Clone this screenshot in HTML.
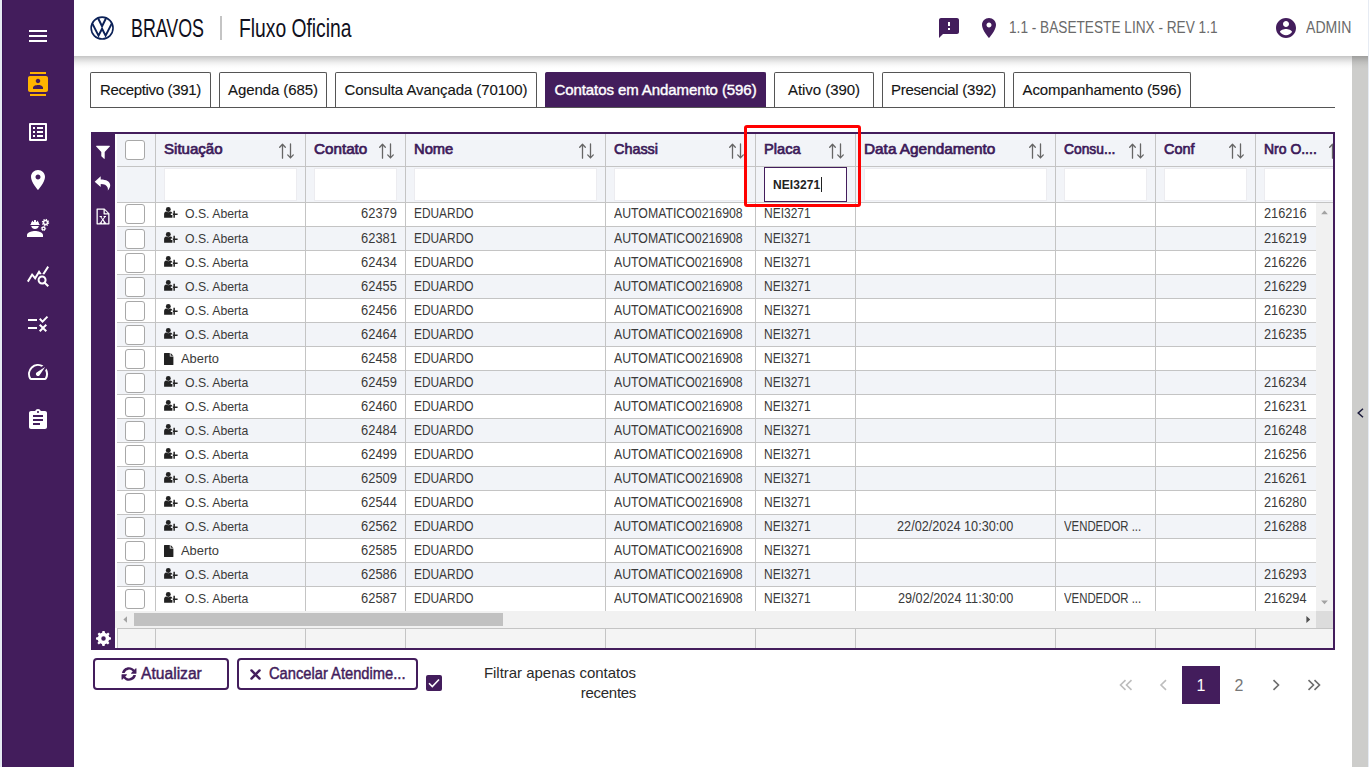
<!DOCTYPE html>
<html lang="pt-BR"><head><meta charset="utf-8"><title>BRAVOS | Fluxo Oficina</title>
<style>
*{box-sizing:border-box}
html,body{margin:0;padding:0}
body{width:1369px;height:767px;overflow:hidden;background:#fff;font-family:"Liberation Sans",sans-serif;color:#333;position:relative}
.abs{position:absolute}
.lstrip{position:absolute;left:0;top:0;width:2px;height:767px;background:#e6ebf3}
.side{position:absolute;left:2px;top:0;width:72px;height:767px;background:#431d5c;border-left:1px solid #3a1556}
.side svg{position:absolute;left:23px;width:24px;height:24px;fill:#fff}
.hdr{position:absolute;left:74px;top:0;width:1294px;height:56px;background:#fff;z-index:5}
.hsh{position:absolute;left:74px;top:56px;width:1294px;height:13px;z-index:5;background:linear-gradient(to bottom,rgba(0,0,0,.23) 0,rgba(0,0,0,.14) 25%,rgba(0,0,0,.065) 50%,rgba(0,0,0,.02) 75%,rgba(0,0,0,0) 100%)}
.rstrip{position:absolute;left:1352px;top:56px;width:16px;height:711px;background:#cdcdcb}
.redge{position:absolute;left:1368px;top:0;width:1px;height:767px;background:#e6ebf3;z-index:6}
.hdr svg{position:absolute}
.t1,.t2{position:absolute;top:13px;height:30px;line-height:30px;font-size:25px;color:#101020;white-space:nowrap;transform-origin:0 50%}
.hsep{position:absolute;left:146px;top:16px;width:2px;height:24px;background:#c4c4c4}
.htxt{position:absolute;top:18px;height:20px;line-height:20px;font-size:16px;color:#6a6a6a;white-space:nowrap;transform-origin:0 50%}
.tabs{position:absolute;left:90px;top:72px;width:1245px;height:36px;border-bottom:1px solid #555}
.tab{position:absolute;top:0;height:35px;border:1px solid #555;border-bottom:none;border-radius:2px 2px 0 0;background:#fff;font-size:15px;line-height:33px;text-align:center;color:#141414;-webkit-text-stroke:0.12px #141414;white-space:nowrap}
.tab.on{background:#431d5c;border-color:#431d5c;color:#fff;-webkit-text-stroke:0.4px #fff}
.grid{position:absolute;left:91px;top:132px;width:1244px;height:518px;border:2px solid #431d5c;border-left:none;background:#f2f4f8;overflow:hidden}
.tb{position:absolute;left:0;top:-2px;width:24px;height:518px;background:#431d5c}
.tb svg{position:absolute;fill:#fff}
.hrow{position:absolute;left:26px;top:0;height:33px;width:1300px;background:#f2f4f8;border-bottom:1px solid #c4c4c4}
.frow{position:absolute;left:26px;top:33px;height:36px;width:1300px;background:#f2f4f8;border-bottom:1px solid #c4c4c4}
.hc{position:absolute;top:0;height:100%;border-left:1px solid #c4c4c4;font-weight:700;font-size:15px;color:#3c1a59;line-height:30px;padding-left:8px;white-space:nowrap}
.hc svg{position:absolute;top:9px;width:16px;height:16px}
.fc{position:absolute;top:0;height:100%;border-left:1px solid #c4c4c4}
.fi{position:absolute;left:8px;top:1px;height:33px;background:#fff;border:1px solid #ececf0}
.rows{position:absolute;left:26px;top:69px;width:1199px;height:408px;overflow:hidden;background:#fff}
.r{position:relative;height:24px;width:1300px;border-bottom:1px solid #c4c4c4;background:#fff}
.r.odd{background:#f2f4f8}
.c{position:absolute;top:0;height:23px;line-height:23px;font-size:13px;border-left:1px solid #c4c4c4;padding-left:8px;white-space:nowrap;overflow:hidden;color:#3a3a3a}
.cb{position:absolute;left:8px;top:2px;width:20px;height:20px;border:1px solid #a8a8a8;border-radius:3px;background:#fff}
.c0{left:0;width:40px;border-left:none}
.c1{left:38px;width:150px}
.c2{left:188px;width:100px;text-align:right;padding-right:8px}
.c3{left:288px;width:200px}
.c4{left:488px;width:150px}
.c5{left:638px;width:100px}
.c6{left:738px;width:200px;text-align:center;padding-left:0}
.c7{left:938px;width:100px}
.c8{left:1038px;width:100px}
.c9{left:1138px;width:160px}
.ic-os{position:absolute;left:8px;top:5px;width:14px;height:11px;fill:#222}
.ic-ab{position:absolute;left:8px;top:6px;width:10px;height:12px;fill:#222}
.st{position:absolute;left:29px;font-size:13.5px;transform:scaleX(.907);transform-origin:0 50%}
.st2{position:absolute;left:25px;font-size:13.5px;transform:scaleX(.955);transform-origin:0 50%}
.btn{position:absolute;top:658px;height:32px;border:2px solid #431d5c;border-radius:4px;background:#fff;color:#431d5c;font-weight:400;font-size:16px;line-height:28px;white-space:nowrap;-webkit-text-stroke:0.45px #431d5c}
.btn svg{position:absolute;fill:#431d5c}
.btn span{position:absolute;top:0;transform-origin:0 50%}
.pg{position:absolute;top:666px;width:38px;height:38px;line-height:40px;text-align:center;font-size:16px;color:#777}
.chev{position:absolute}
.pg.on{background:#431d5c;color:#fff}
.vsb{position:absolute;left:1225px;top:69px;width:17px;height:408px;background:#f1f1f1}
.hsb{position:absolute;left:24px;top:477px;width:1218px;height:17px;background:#f1f1f1}
.thumb{position:absolute;left:19px;top:2px;width:369px;height:13px;background:#c1c1c1}
.corner{position:absolute;left:1201px;top:0;width:17px;height:17px;background:#dcdcdc}
.foot{position:absolute;left:26px;top:494px;width:1300px;height:20px;background:#f2f4f8;border-top:1px solid #c4c4c4}

.gap{position:absolute;left:24px;top:0;width:2px;height:514px;background:#fff}

.r:first-child .c{line-height:21px}
.r:first-child .cb{top:1px}
.r:first-child .ic-os{top:4px}

.r:last-child{border-bottom:none}
.foot{border-left:1px solid #c4c4c4;background:#f4f4f4}
.foot .fc{margin-left:-1px}
.foot .fc:first-child{margin-left:0}
.r:last-child .c{height:24px}

.c b{display:inline-block;font-weight:400;font-size:14px;transform-origin:0 50%}
.c2 b{transform:scaleX(.92);transform-origin:100% 50%}
.c3 b{transform:scaleX(.85)}
.c4 b{transform:scaleX(.878)}
.c5 b{transform:scaleX(.857)}
.c6 b{transform:scaleX(.906);transform-origin:50% 50%}
.c7 b{transform:scaleX(.813)}
.c9 b{transform:scaleX(.91)}
.hc b{display:inline-block;transform-origin:0 50%;font-weight:400;-webkit-text-stroke:0.7px #3c1a59}

</style></head>
<body>
<svg width="0" height="0" style="position:absolute">
<defs>
<g id="i-userplus"><circle cx="4.300" cy="2.500" r="2.450"/><path d="M0.100 10.700V7c0-1.500 1-2.400 2-2.500.6.500 1.400.8 2.200.8s1.600-.3 2.200-.8c1 .1 1.800.9 1.900 2.100H6.800v1.400h1.600v2.700z"/><path d="M9.400 3.700h1.500v2.900h2.700V8h-2.700v2.700H9.400V8H8.900V6.600h.5z"/></g>
<path id="i-file" d="M0.600 0h5.200v3.400h3.600V11.400a0.600 0.600 0 0 1-0.600 0.600H0.600A0.600 0.600 0 0 1 0 11.400V0.600A0.600 0.600 0 0 1 0.600 0zM6.600 0.100L9.300 2.700H6.600z"/>
<g id="i-sort" fill="none" stroke="#666" stroke-width="1.300" stroke-linecap="round" stroke-linejoin="round"><path d="M3.500 15.200V1.300M0.700 4.300l2.800-3 2.800 3"/><path d="M11.500 1v13.900M8.700 11.900l2.800 3 2.800-3"/></g>
</defs>
</svg>
<div class="lstrip"></div>
<div class="side">
<svg style="top:24px" viewBox="0 0 24 24"><path d="M3 18h18v-2H3v2zm0-5h18v-2H3v2zm0-7v2h18V6H3z"/></svg>
<svg style="top:72px;fill:#ffb300" viewBox="0 0 24 24"><path d="M20 0H4v2h16V0zM4 24h16v-2H4v2zM20 4H4c-1.100 0-2 .9-2 2v12c0 1.100.9 2 2 2h16c1.100 0 2-.9 2-2V6c0-1.100-.9-2-2-2zm-8 2.750c1.240 0 2.250 1.010 2.250 2.250s-1.010 2.250-2.250 2.250S9.750 10.240 9.750 9 10.760 6.750 12 6.750zM17 17H7v-1.500c0-1.670 3.330-2.500 5-2.500s5 .83 5 2.500V17z"/></svg>
<svg style="top:120px" viewBox="0 0 24 24"><path d="M19 5v14H5V5h14m1.100-2H3.900c-.5 0-.9.400-.9.900v16.200c0 .4.400.9.900.9h16.200c.4 0 .9-.5.900-.9V3.900c0-.5-.5-.9-.9-.9zM11 7h6v2h-6V7zm0 4h6v2h-6v-2zm0 4h6v2h-6zM7 7h2v2H7zm0 4h2v2H7zm0 4h2v2H7z"/></svg>
<svg style="top:168px" viewBox="0 0 24 24"><path d="M12 2C8.130 2 5 5.130 5 9c0 5.250 7 13 7 13s7-7.750 7-13c0-3.870-3.130-7-7-7zm0 9.500c-1.380 0-2.500-1.120-2.500-2.500s1.120-2.500 2.500-2.500 2.500 1.120 2.500 2.500-1.120 2.500-2.500 2.500z"/></svg>
<svg style="top:216px" viewBox="0 0 24 24"><path d="M9 15c-2.670 0-8 1.340-8 4v2h16v-2c0-2.660-5.330-4-8-4zM4.740 9h8.530c.27 0 .49-.22.490-.49v-.02a.49.490 0 0 0-.49-.49H13c0-1.480-.81-2.750-2-3.450v.95c0 .28-.22.500-.5.500s-.5-.22-.5-.5V4.140C9.680 4.060 9.350 4 9 4s-.68.060-1 .14V5.500c0 .28-.22.500-.5.500S7 5.780 7 5.500v-.95C5.810 5.250 5 6.520 5 8h-.26a.49.490 0 0 0-.49.490v.03c0 .26.220.48.490.48zM9 13c1.860 0 3.410-1.280 3.860-3H5.140c.45 1.720 2 3 3.860 3z"/><g fill="none" stroke="#fff"><circle cx="19.500" cy="6.500" r="2" stroke-width="1.500"/><circle cx="19.500" cy="6.500" r="3.100" stroke-width="1.200" stroke-dasharray="1.200 1.230"/><circle cx="17.500" cy="12.500" r="1.400" stroke-width="1.200"/><circle cx="17.500" cy="12.500" r="2.200" stroke-width="1" stroke-dasharray="0.900 0.830"/></g></svg>
<svg style="top:264px" viewBox="0 0 24 24"><path d="M19.880 18.470c.44-.7.700-1.510.7-2.390 0-2.490-2.010-4.500-4.500-4.500s-4.500 2.010-4.500 4.500 2.010 4.500 4.490 4.500c.88 0 1.700-.26 2.390-.7L21.580 23 23 21.580l-3.120-3.110zm-3.800.11c-1.380 0-2.500-1.120-2.500-2.500s1.120-2.500 2.500-2.500 2.500 1.120 2.500 2.500-1.120 2.500-2.500 2.500zm-.36-8.500c-.74.020-1.450.18-2.100.45l-.55-.83-3.800 6.180-3.010-3.520-3.630 5.810L1 17l5-8 3 3.500L13 6l2.720 4.080zm2.590.5c-.64-.28-1.330-.45-2.050-.49L21.380 2 23 3.180l-4.690 7.400z"/></svg>
<svg style="top:312px" viewBox="0 0 24 24"><path d="M16.540 11L13 7.460l1.410-1.410 2.120 2.120 4.240-4.240 1.410 1.410L16.540 11zM11 7H2v2h9V7zm10 6.410L19.590 12 17 14.590 14.410 12 13 13.410 15.590 16 13 18.590 14.410 20 17 17.410 19.590 20 21 18.590 18.410 16 21 13.410zM11 15H2v2h9v-2z"/></svg>
<svg style="top:360px" viewBox="0 0 24 24"><path d="M20.380 8.570l-1.230 1.850a8 8 0 0 1-.22 7.580H5.070A8 8 0 0 1 15.580 6.850l1.850-1.230A10 10 0 0 0 3.350 19a2 2 0 0 0 1.720 1h13.850a2 2 0 0 0 1.740-1 10 10 0 0 0-.27-10.440zm-9.790 6.840a2 2 0 0 0 2.830 0l5.660-8.490-8.490 5.660a2 2 0 0 0 0 2.830z"/></svg>
<svg style="top:408px" viewBox="0 0 24 24"><path d="M19 3h-4.180C14.400 1.840 13.300 1 12 1c-1.300 0-2.400.84-2.820 2H5c-1.100 0-2 .9-2 2v14c0 1.100.9 2 2 2h14c1.100 0 2-.9 2-2V5c0-1.100-.9-2-2-2zm-7 0c.55 0 1 .45 1 1s-.45 1-1 1-1-.45-1-1 .45-1 1-1zm2 14H7v-2h7v2zm3-4H7v-2h10v2zm0-4H7V7h10v2z"/></svg>
</div>
<div class="hdr">
<svg style="left:16px;top:16px;width:24px;height:24px" viewBox="0 0 24 24"><circle cx="12.100" cy="12.100" r="10.950" fill="none" stroke="#0b2157" stroke-width="1.600"/><path d="M8.100 2.300L12.050 10.200 16 2.300M2.400 7.600L8.500 19.700 12.050 12.700 15.600 19.700 21.700 7.600" fill="none" stroke="#0b2157" stroke-width="1.950" stroke-linejoin="miter"/></svg>
<div class="t1" style="left:57px;transform:scaleX(.7135)">BRAVOS</div>
<div class="hsep"></div>
<div class="t2" style="left:165px;transform:scaleX(.771)">Fluxo Oficina</div>
<svg style="left:862.5px;top:16px;width:24px;height:24px;fill:#431d5c" viewBox="0 0 24 24"><path d="M20 2H4c-1.100 0-1.990.9-1.990 2L2 22l4-4h14c1.100 0 2-.9 2-2V4c0-1.100-.9-2-2-2zm-7 12h-2v-2h2v2zm0-4h-2V6h2v4z"/></svg>
<svg style="left:902.5px;top:16px;width:24px;height:24px;fill:#431d5c" viewBox="0 0 24 24"><path d="M12 2C8.130 2 5 5.130 5 9c0 5.250 7 13 7 13s7-7.750 7-13c0-3.870-3.130-7-7-7zm0 9.500c-1.380 0-2.500-1.120-2.500-2.500s1.120-2.500 2.500-2.500 2.500 1.120 2.500 2.500-1.120 2.500-2.500 2.500z"/></svg>
<div class="htxt" style="left:935px;transform:scaleX(.853)">1.1 - BASETESTE LINX - REV 1.1</div>
<svg style="left:1199.500px;top:16px;width:24px;height:24px;fill:#431d5c" viewBox="0 0 24 24"><path d="M12 2C6.480 2 2 6.480 2 12s4.480 10 10 10 10-4.480 10-10S17.520 2 12 2zm0 3c1.660 0 3 1.340 3 3s-1.340 3-3 3-3-1.340-3-3 1.340-3 3-3zm0 14.200c-2.500 0-4.710-1.280-6-3.220.030-1.990 4-3.080 6-3.080 1.990 0 5.970 1.090 6 3.080-1.290 1.940-3.500 3.220-6 3.220z"/></svg>
<div class="htxt" style="left:1232px;transform:scaleX(.879)">ADMIN</div>
</div>
<div class="hsh"></div>
<div class="rstrip"><svg style="position:absolute;left:4px;top:351px;width:8px;height:12px" viewBox="0 0 8 12"><path d="M7 1.700L2.200 6 7 10.300" fill="none" stroke="#1a1a3a" stroke-width="1.500"/></svg></div>
<div class="redge"></div>
<div class="tabs">
<div class="tab" style="left:0;width:121px;letter-spacing:-0.33px">Receptivo (391)</div>
<div class="tab" style="left:129px;width:108px;letter-spacing:-0.08px">Agenda (685)</div>
<div class="tab" style="left:245px;width:202px;letter-spacing:-0.08px">Consulta Avançada (70100)</div>
<div class="tab on" style="left:455px;width:221px;letter-spacing:-0.08px">Contatos em Andamento (596)</div>
<div class="tab" style="left:684px;width:100px;letter-spacing:-0.05px">Ativo (390)</div>
<div class="tab" style="left:792px;width:123px;letter-spacing:-0.26px">Presencial (392)</div>
<div class="tab" style="left:923px;width:178px;letter-spacing:-0.10px">Acompanhamento (596)</div>
</div>
<div class="grid">
<div class="tb">
<svg style="left:5px;top:13px;width:14px;height:14px" viewBox="0 0 14 14"><path d="M0.500 0.800h13c.4 0 .6.500.3.800L8.700 7v6.500c0 .4-.4.600-.7.300L5.600 11.600c-.2-.1-.3-.3-.3-.500V7L.2 1.600C-.1 1.300.1.800.5.800z"/></svg>
<svg style="left:3px;top:44px;width:17px;height:15px" viewBox="0 0 16 15"><path d="M6.200 0.300L0.200 5.700l6 5.400V7.900c3.600 0 5.900 1 6.900 3.500.4 1 .400 2.100.2 3.200 1.600-1.700 2.500-3.700 2.400-5.600C15.500 5.500 12 3.600 6.200 3.500z"/></svg>
<svg style="left:5px;top:76px;width:14px;height:17px" viewBox="0 0 14 17"><path d="M1 0.500h7.500l5 5V16c0 .3-.2.500-.5.500H1c-.3 0-.5-.2-.5-.5V1c0-.3.200-.5.500-.5zM1.800 1.800v13.400h10.400V6.500H8c-.3 0-.5-.2-.5-.5V1.800zM8.800 2.300v2.900h2.900zM3.600 8h2.300v.9h-.5l1.400 2 1.400-2h-.6V8H10v.9h-.6l-1.900 2.700 2 2.800h.6v.9H7.400v-.9H8l-1.300-2-1.300 2H6v.9H3.600v-.9h.6l2-2.800-1.900-2.700h-.7z" fill-rule="evenodd"/></svg>
<svg style="left:5px;top:499px;width:15px;height:15px" viewBox="0 0 14 14"><path d="M14 8V6l-1.700-.3c-.1-.5-.3-.9-.6-1.400l1-1.400-1.400-1.400-1.400 1c-.4-.3-.9-.5-1.400-.6L8 0H6l-.3 1.700c-.5.100-1 .300-1.400.6l-1.400-1-1.400 1.400 1 1.400c-.3.400-.5.900-.6 1.400L0 6v2l1.700.3c.1.500.3 1 .6 1.400l-1 1.400 1.400 1.400 1.400-1c.4.300.9.500 1.400.6L6 14h2l.3-1.700c.5-.1 1-.3 1.400-.6l1.400 1 1.400-1.400-1-1.400c.3-.4.500-.9.600-1.400zM7 9.100A2.100 2.100 0 1 1 7 4.900a2.100 2.100 0 0 1 0 4.200z"/></svg>
</div>
<div class="gap"></div>
<div class="hrow">
<div class="hc" style="left:0;width:38px;border-left:none"><i class="cb" style="top:6px"></i></div>
<div class="hc" style="left:38px;width:150px"><b style="transform:scaleX(1.004)">Situação</b><svg style="left:123px" viewBox="0 0 16 16"><use href="#i-sort"/></svg></div>
<div class="hc" style="left:188px;width:100px"><b style="transform:scaleX(1.014)">Contato</b><svg style="left:73px" viewBox="0 0 16 16"><use href="#i-sort"/></svg></div>
<div class="hc" style="left:288px;width:200px"><b style="transform:scaleX(0.982)">Nome</b><svg style="left:173px" viewBox="0 0 16 16"><use href="#i-sort"/></svg></div>
<div class="hc" style="left:488px;width:150px"><b style="transform:scaleX(0.959)">Chassi</b><svg style="left:123px" viewBox="0 0 16 16"><use href="#i-sort"/></svg></div>
<div class="hc" style="left:638px;width:100px"><b style="transform:scaleX(0.975)">Placa</b><svg style="left:73px" viewBox="0 0 16 16"><use href="#i-sort"/></svg></div>
<div class="hc" style="left:738px;width:200px"><b style="transform:scaleX(1.023)">Data Agendamento</b><svg style="left:173px" viewBox="0 0 16 16"><use href="#i-sort"/></svg></div>
<div class="hc" style="left:938px;width:100px"><b style="transform:scaleX(0.92)">Consu...</b><svg style="left:73px" viewBox="0 0 16 16"><use href="#i-sort"/></svg></div>
<div class="hc" style="left:1038px;width:100px"><b style="transform:scaleX(0.962)">Conf</b><svg style="left:73px" viewBox="0 0 16 16"><use href="#i-sort"/></svg></div>
<div class="hc" style="left:1138px;width:160px"><b style="transform:scaleX(0.931)">Nro O....</b><svg style="left:73px" viewBox="0 0 16 16"><use href="#i-sort"/></svg></div>
</div>
<div class="frow">
<div class="fc" style="left:0;width:38px;border-left:none"></div>
<div class="fc" style="left:38px;width:150px"><div class="fi" style="width:133px"></div></div>
<div class="fc" style="left:188px;width:100px"><div class="fi" style="width:83px"></div></div>
<div class="fc" style="left:288px;width:200px"><div class="fi" style="width:183px"></div></div>
<div class="fc" style="left:488px;width:150px"><div class="fi" style="width:133px"></div></div>
<div class="fc" style="left:638px;width:100px"><div class="fi" style="width:83px;border-color:#431d5c;top:0px;height:35px;font-size:12px;font-weight:700;color:#222;line-height:35px;padding-left:8px;letter-spacing:0.08px">NEI3271<span style="display:inline-block;width:1px;height:15px;background:#222;vertical-align:-3px;margin-left:1px"></span></div></div>
<div class="fc" style="left:738px;width:200px"><div class="fi" style="width:183px"></div></div>
<div class="fc" style="left:938px;width:100px"><div class="fi" style="width:83px"></div></div>
<div class="fc" style="left:1038px;width:100px"><div class="fi" style="width:83px"></div></div>
<div class="fc" style="left:1138px;width:160px"><div class="fi" style="width:143px"></div></div>
</div>
<div class="rows">
<div class="r"><div class="c c0"><i class="cb"></i></div><div class="c c1"><svg class="ic-os" viewBox="0 0 14 11"><use href="#i-userplus"/></svg><span class="st">O.S. Aberta</span></div><div class="c c2"><b>62379</b></div><div class="c c3"><b>EDUARDO</b></div><div class="c c4"><b>AUTOMATICO0216908</b></div><div class="c c5"><b>NEI3271</b></div><div class="c c6"><b></b></div><div class="c c7"><b></b></div><div class="c c8"></div><div class="c c9"><b>216216</b></div></div>
<div class="r odd"><div class="c c0"><i class="cb"></i></div><div class="c c1"><svg class="ic-os" viewBox="0 0 14 11"><use href="#i-userplus"/></svg><span class="st">O.S. Aberta</span></div><div class="c c2"><b>62381</b></div><div class="c c3"><b>EDUARDO</b></div><div class="c c4"><b>AUTOMATICO0216908</b></div><div class="c c5"><b>NEI3271</b></div><div class="c c6"><b></b></div><div class="c c7"><b></b></div><div class="c c8"></div><div class="c c9"><b>216219</b></div></div>
<div class="r"><div class="c c0"><i class="cb"></i></div><div class="c c1"><svg class="ic-os" viewBox="0 0 14 11"><use href="#i-userplus"/></svg><span class="st">O.S. Aberta</span></div><div class="c c2"><b>62434</b></div><div class="c c3"><b>EDUARDO</b></div><div class="c c4"><b>AUTOMATICO0216908</b></div><div class="c c5"><b>NEI3271</b></div><div class="c c6"><b></b></div><div class="c c7"><b></b></div><div class="c c8"></div><div class="c c9"><b>216226</b></div></div>
<div class="r odd"><div class="c c0"><i class="cb"></i></div><div class="c c1"><svg class="ic-os" viewBox="0 0 14 11"><use href="#i-userplus"/></svg><span class="st">O.S. Aberta</span></div><div class="c c2"><b>62455</b></div><div class="c c3"><b>EDUARDO</b></div><div class="c c4"><b>AUTOMATICO0216908</b></div><div class="c c5"><b>NEI3271</b></div><div class="c c6"><b></b></div><div class="c c7"><b></b></div><div class="c c8"></div><div class="c c9"><b>216229</b></div></div>
<div class="r"><div class="c c0"><i class="cb"></i></div><div class="c c1"><svg class="ic-os" viewBox="0 0 14 11"><use href="#i-userplus"/></svg><span class="st">O.S. Aberta</span></div><div class="c c2"><b>62456</b></div><div class="c c3"><b>EDUARDO</b></div><div class="c c4"><b>AUTOMATICO0216908</b></div><div class="c c5"><b>NEI3271</b></div><div class="c c6"><b></b></div><div class="c c7"><b></b></div><div class="c c8"></div><div class="c c9"><b>216230</b></div></div>
<div class="r odd"><div class="c c0"><i class="cb"></i></div><div class="c c1"><svg class="ic-os" viewBox="0 0 14 11"><use href="#i-userplus"/></svg><span class="st">O.S. Aberta</span></div><div class="c c2"><b>62464</b></div><div class="c c3"><b>EDUARDO</b></div><div class="c c4"><b>AUTOMATICO0216908</b></div><div class="c c5"><b>NEI3271</b></div><div class="c c6"><b></b></div><div class="c c7"><b></b></div><div class="c c8"></div><div class="c c9"><b>216235</b></div></div>
<div class="r"><div class="c c0"><i class="cb"></i></div><div class="c c1"><svg class="ic-ab" viewBox="0 0 10 12"><use href="#i-file"/></svg><span class="st2">Aberto</span></div><div class="c c2"><b>62458</b></div><div class="c c3"><b>EDUARDO</b></div><div class="c c4"><b>AUTOMATICO0216908</b></div><div class="c c5"><b>NEI3271</b></div><div class="c c6"><b></b></div><div class="c c7"><b></b></div><div class="c c8"></div><div class="c c9"><b></b></div></div>
<div class="r odd"><div class="c c0"><i class="cb"></i></div><div class="c c1"><svg class="ic-os" viewBox="0 0 14 11"><use href="#i-userplus"/></svg><span class="st">O.S. Aberta</span></div><div class="c c2"><b>62459</b></div><div class="c c3"><b>EDUARDO</b></div><div class="c c4"><b>AUTOMATICO0216908</b></div><div class="c c5"><b>NEI3271</b></div><div class="c c6"><b></b></div><div class="c c7"><b></b></div><div class="c c8"></div><div class="c c9"><b>216234</b></div></div>
<div class="r"><div class="c c0"><i class="cb"></i></div><div class="c c1"><svg class="ic-os" viewBox="0 0 14 11"><use href="#i-userplus"/></svg><span class="st">O.S. Aberta</span></div><div class="c c2"><b>62460</b></div><div class="c c3"><b>EDUARDO</b></div><div class="c c4"><b>AUTOMATICO0216908</b></div><div class="c c5"><b>NEI3271</b></div><div class="c c6"><b></b></div><div class="c c7"><b></b></div><div class="c c8"></div><div class="c c9"><b>216231</b></div></div>
<div class="r odd"><div class="c c0"><i class="cb"></i></div><div class="c c1"><svg class="ic-os" viewBox="0 0 14 11"><use href="#i-userplus"/></svg><span class="st">O.S. Aberta</span></div><div class="c c2"><b>62484</b></div><div class="c c3"><b>EDUARDO</b></div><div class="c c4"><b>AUTOMATICO0216908</b></div><div class="c c5"><b>NEI3271</b></div><div class="c c6"><b></b></div><div class="c c7"><b></b></div><div class="c c8"></div><div class="c c9"><b>216248</b></div></div>
<div class="r"><div class="c c0"><i class="cb"></i></div><div class="c c1"><svg class="ic-os" viewBox="0 0 14 11"><use href="#i-userplus"/></svg><span class="st">O.S. Aberta</span></div><div class="c c2"><b>62499</b></div><div class="c c3"><b>EDUARDO</b></div><div class="c c4"><b>AUTOMATICO0216908</b></div><div class="c c5"><b>NEI3271</b></div><div class="c c6"><b></b></div><div class="c c7"><b></b></div><div class="c c8"></div><div class="c c9"><b>216256</b></div></div>
<div class="r odd"><div class="c c0"><i class="cb"></i></div><div class="c c1"><svg class="ic-os" viewBox="0 0 14 11"><use href="#i-userplus"/></svg><span class="st">O.S. Aberta</span></div><div class="c c2"><b>62509</b></div><div class="c c3"><b>EDUARDO</b></div><div class="c c4"><b>AUTOMATICO0216908</b></div><div class="c c5"><b>NEI3271</b></div><div class="c c6"><b></b></div><div class="c c7"><b></b></div><div class="c c8"></div><div class="c c9"><b>216261</b></div></div>
<div class="r"><div class="c c0"><i class="cb"></i></div><div class="c c1"><svg class="ic-os" viewBox="0 0 14 11"><use href="#i-userplus"/></svg><span class="st">O.S. Aberta</span></div><div class="c c2"><b>62544</b></div><div class="c c3"><b>EDUARDO</b></div><div class="c c4"><b>AUTOMATICO0216908</b></div><div class="c c5"><b>NEI3271</b></div><div class="c c6"><b></b></div><div class="c c7"><b></b></div><div class="c c8"></div><div class="c c9"><b>216280</b></div></div>
<div class="r odd"><div class="c c0"><i class="cb"></i></div><div class="c c1"><svg class="ic-os" viewBox="0 0 14 11"><use href="#i-userplus"/></svg><span class="st">O.S. Aberta</span></div><div class="c c2"><b>62562</b></div><div class="c c3"><b>EDUARDO</b></div><div class="c c4"><b>AUTOMATICO0216908</b></div><div class="c c5"><b>NEI3271</b></div><div class="c c6"><b>22/02/2024 10:30:00</b></div><div class="c c7"><b>VENDEDOR ...</b></div><div class="c c8"></div><div class="c c9"><b>216288</b></div></div>
<div class="r"><div class="c c0"><i class="cb"></i></div><div class="c c1"><svg class="ic-ab" viewBox="0 0 10 12"><use href="#i-file"/></svg><span class="st2">Aberto</span></div><div class="c c2"><b>62585</b></div><div class="c c3"><b>EDUARDO</b></div><div class="c c4"><b>AUTOMATICO0216908</b></div><div class="c c5"><b>NEI3271</b></div><div class="c c6"><b></b></div><div class="c c7"><b></b></div><div class="c c8"></div><div class="c c9"><b></b></div></div>
<div class="r odd"><div class="c c0"><i class="cb"></i></div><div class="c c1"><svg class="ic-os" viewBox="0 0 14 11"><use href="#i-userplus"/></svg><span class="st">O.S. Aberta</span></div><div class="c c2"><b>62586</b></div><div class="c c3"><b>EDUARDO</b></div><div class="c c4"><b>AUTOMATICO0216908</b></div><div class="c c5"><b>NEI3271</b></div><div class="c c6"><b></b></div><div class="c c7"><b></b></div><div class="c c8"></div><div class="c c9"><b>216293</b></div></div>
<div class="r"><div class="c c0"><i class="cb"></i></div><div class="c c1"><svg class="ic-os" viewBox="0 0 14 11"><use href="#i-userplus"/></svg><span class="st">O.S. Aberta</span></div><div class="c c2"><b>62587</b></div><div class="c c3"><b>EDUARDO</b></div><div class="c c4"><b>AUTOMATICO0216908</b></div><div class="c c5"><b>NEI3271</b></div><div class="c c6"><b>29/02/2024 11:30:00</b></div><div class="c c7"><b>VENDEDOR ...</b></div><div class="c c8"></div><div class="c c9"><b>216294</b></div></div>
</div>
<div class="vsb"><svg style="position:absolute;left:5px;top:7px;width:7px;height:4.500px" viewBox="0 0 9 6"><path d="M0 5.500L4.500 0.500 9 5.500z" fill="#a3a3a3"/></svg><svg style="position:absolute;left:5px;top:397px;width:7px;height:4.500px" viewBox="0 0 9 6"><path d="M0 0.500L4.500 5.500 9 0.500z" fill="#a3a3a3"/></svg></div>
<div class="hsb"><svg style="position:absolute;left:7.500px;top:5px;width:4.700px;height:7px" viewBox="0 0 6 9"><path d="M5.500 0L0.500 4.500 5.500 9z" fill="#a3a3a3"/></svg><div class="thumb"></div><svg style="position:absolute;left:1190.500px;top:5px;width:4.700px;height:7px" viewBox="0 0 6 9"><path d="M0.500 0L5.500 4.500 0.500 9z" fill="#505050"/></svg><div class="corner"></div></div>
<div class="foot">
<div class="fc" style="left:0;width:38px;border-left:none"></div>
<div class="fc" style="left:38px;width:150px"></div>
<div class="fc" style="left:188px;width:100px"></div>
<div class="fc" style="left:288px;width:200px"></div>
<div class="fc" style="left:488px;width:150px"></div>
<div class="fc" style="left:638px;width:100px"></div>
<div class="fc" style="left:738px;width:200px"></div>
<div class="fc" style="left:938px;width:100px"></div>
<div class="fc" style="left:1038px;width:100px"></div>
<div class="fc" style="left:1138px;width:160px"></div>
</div>

</div>
<div class="redbox" style="position:absolute;left:744px;top:125px;width:117px;height:82px;border:3px solid #ff0000;border-radius:3px;z-index:9"></div>
<div class="btn" style="left:93px;width:136px"><svg style="left:25.500px;top:5.500px;width:16px;height:16px" viewBox="0 0 15 15"><path d="M7.500 1.200c2 0 3.800.9 5 2.400l1.400-1.400c.2-.2.600-.1.600.3v4.300c0 .2-.2.400-.4.400H9.800c-.4 0-.5-.4-.3-.6l1.500-1.500A4.300 4.300 0 0 0 3.500 6.300c0 .2-.2.300-.4.300H1.400c-.2 0-.4-.2-.4-.5C1.600 3.300 4.300 1.200 7.500 1.200zM.9 7.800h4.300c.4 0 .5.400.3.600L4 9.900a4.300 4.300 0 0 0 7.500-1.200c.1-.2.200-.3.400-.3h1.700c.3 0 .4.200.4.500-.6 2.800-3.300 4.900-6.500 4.900-2 0-3.800-.9-5-2.400l-1.400 1.400c-.2.200-.6.100-.6-.3V8.200c0-.2.200-.4.400-.4z"/></svg><span style="left:46px;transform:scaleX(.977)">Atualizar</span></div>
<div class="btn" style="left:237px;width:181px"><svg style="left:10.500px;top:9px;width:11px;height:11px" viewBox="0 0 12 12"><path d="M1.600 1.600l8.800 8.800M10.400 1.600l-8.800 8.800" fill="none" stroke="#431d5c" stroke-width="2.700" stroke-linecap="round"/></svg><span style="left:30px;transform:scaleX(.919)">Cancelar Atendime...</span></div>
<div style="position:absolute;left:426px;top:675px;width:16px;height:16px;background:#431d5c;border-radius:2px"><svg style="position:absolute;left:2px;top:3px;width:12px;height:10px" viewBox="0 0 12 10"><path d="M1 5.200l3.300 3.300L11 1.500" fill="none" stroke="#fff" stroke-width="1.600"/></svg></div>
<div style="position:absolute;left:450px;top:663px;width:186px;text-align:right;font-size:15px;line-height:20px;color:#2a2a2a;letter-spacing:-0.02px">Filtrar apenas contatos<br><span style="letter-spacing:-0.3px">recentes</span></div>
<svg class="chev" style="left:1119px;top:679px;width:14px;height:12px" viewBox="0 0 14 12"><path d="M6.500 1.200L1.500 6l5 4.800M12.500 1.200L7.500 6l5 4.800" fill="none" stroke="#bdbdbd" stroke-width="1.600"/></svg>
<svg class="chev" style="left:1159px;top:679px;width:8px;height:12px" viewBox="0 0 8 12"><path d="M7 1.200L2 6l5 4.800" fill="none" stroke="#bdbdbd" stroke-width="1.600"/></svg>
<div class="pg on" style="left:1182px">1</div>
<div class="pg" style="left:1220px">2</div>
<svg class="chev" style="left:1272px;top:679px;width:8px;height:12px" viewBox="0 0 8 12"><path d="M1.500 1.200L6.500 6l-5 4.800" fill="none" stroke="#6c6c6c" stroke-width="1.600"/></svg>
<svg class="chev" style="left:1307px;top:679px;width:14px;height:12px" viewBox="0 0 14 12"><path d="M1.500 1.200L6.500 6l-5 4.800M7.500 1.200L12.500 6l-5 4.800" fill="none" stroke="#6c6c6c" stroke-width="1.600"/></svg>
</body></html>
